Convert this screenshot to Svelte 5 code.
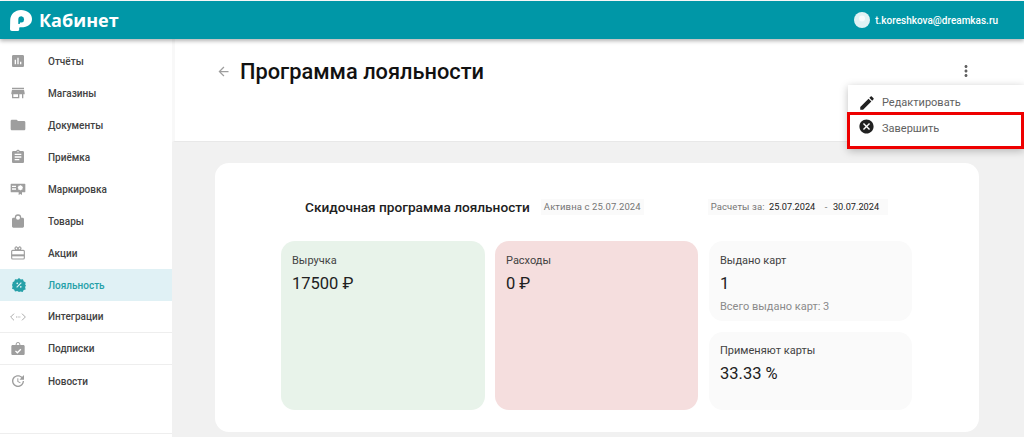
<script lang="ts">
  const menu = [
    { label: "Отчёты", icon: "report" },
    { label: "Магазины", icon: "store" },
    { label: "Документы", icon: "folder" },
    { label: "Приёмка", icon: "clipboard" },
    { label: "Маркировка", icon: "marking" },
    { label: "Товары", icon: "bag" },
    { label: "Акции", icon: "gift" },
    { label: "Лояльность", icon: "loyalty", active: true },
    { label: "Интеграции", icon: "code", line: true },
    { label: "Подписки", icon: "case", line: true },
    { label: "Новости", icon: "news" },
  ];

  const paths: Record<string, string> = {
    report: "M19 3H5c-1.1 0-2 .9-2 2v14c0 1.1.9 2 2 2h14c1.1 0 2-.9 2-2V5c0-1.1-.9-2-2-2zM9 17H7v-7h2v7zm4 0h-2V7h2v10zm4 0h-2v-4h2v4z",
    store: "M21 4H3v2h18V4zm1 10v-2l-1-5H3l-1 5v2h1v6h11v-6h4v6h2v-6h2zm-10 4H5v-4h7v4z",
    folder: "M10 4H3c-1.1 0-2 .9-2 2v12c0 1.1.9 2 2 2h18c1.1 0 2-.9 2-2V8c0-1.1-.9-2-2-2h-9l-2-2z",
    clipboard: "M19 3h-4.18C14.4 1.84 13.3 1 12 1c-1.3 0-2.4.84-2.82 2H5c-1.1 0-2 .9-2 2v14c0 1.1.9 2 2 2h14c1.1 0 2-.9 2-2V5c0-1.1-.9-2-2-2zm-7 0c.55 0 1 .45 1 1s-.45 1-1 1-1-.45-1-1 .45-1 1-1zm2 14H7v-2h7v2zm3-4H7v-2h10v2zm0-4H7V7h10v2z",
    marking: "M2 4h20c.6 0 1 .4 1 1v11c0 .6-.4 1-1 1h-4v4l-2.500-1.500L13 21v-4H2c-.6 0-1-.4-1-1V5c0-.6.4-1 1-1zm1 3v2h6V7H3zm0 4v2h6v-2H3zm12.500-5l-1.200 1.200h-1.800v1.800L11.300 10.200l1.200 1.200v1.800h1.800l1.200 1.200 1.200-1.200h1.800v-1.800l1.200-1.200-1.200-1.200V7.200h-1.800z",
    bag: "M5 7h2.100A5 5 0 0 1 12 2a5 5 0 0 1 4.900 5H19c1 0 2 1 2 2v11c0 1-1 2-2 2H5c-1 0-2-1-2-2V9c0-1 1-2 2-2zM12 4.200a3 3 0 1 0 0 6 3 3 0 0 0 0-6z",
    case: "M20 6h-4.500V5c0-1.900-1.600-3.500-3.500-3.500S8.500 3.100 8.500 5v1H4c-1.100 0-2 .9-2 2v11c0 1.100.9 2 2 2h16c1.100 0 2-.9 2-2V8c0-1.100-.9-2-2-2zM10 5c0-1.100.9-2 2-2s2 .9 2 2v1h-4V5zm5.600 6.600L17 13l-6 6-3.500-3.500 1.400-1.400 2.100 2.100z",
    news: "M21 10.120h-6.780l2.740-2.820c-2.730-2.700-7.150-2.800-9.880-.1-2.730 2.710-2.730 7.080 0 9.790s7.150 2.710 9.880 0C18.320 15.650 19 14.080 19 12.100h2c0 1.980-.88 4.550-2.640 6.290-3.510 3.480-9.210 3.480-12.720 0-3.500-3.470-3.530-9.110-.02-12.580s9.140-3.470 12.650 0L21 3v7.120zM12.500 8v4.250l3.500 2.080-.72 1.210L11 13V8h1.500z",
  };
</script>

<div class="page">
  <header class="topbar">
    <div class="brand">
      <svg class="logo" viewBox="0 0 22 21" width="22" height="21">
        <path fill="#fff" d="M11 0C5 0 .5 4.300.2 10L0 19c0 1.200.8 2 2 2h6c.8 0 1.200-.5 1.200-1.200V18c0-.5.300-.7.800-.7h1C18 17.300 22 14 22 9 22 3.500 17 0 11 0z" />
        <path fill="#0097a7" d="M11.500 6.300a3.200 3.200 0 0 0-3.200 3.200V14h1.400l.4-1.400h1.400a3.200 3.200 0 0 0 0-6.300z" />
      </svg>
      <span class="brand-name">Кабинет</span>
    </div>
    <div class="user">
      <svg viewBox="0 0 16 16" width="16" height="16">
        <circle cx="8" cy="8" r="8" fill="#e0f2f4" />
        <circle cx="8" cy="6.500" r="3" fill="#f6fbfc" />
      </svg>
      <span>t.koreshkova@dreamkas.ru</span>
    </div>
  </header>

  <div class="body">
    <nav class="sidebar">
      {#each menu as item}
        <div class="nav-item" class:active={item.active} class:line={item.line}>
          <span class="nav-icon">
            {#if item.icon === "code"}
              <svg viewBox="0 0 24 24" width="16" height="16" fill="none" stroke="#9e9e9e" stroke-width="1.300">
                <path d="M6 7l-5 5 5 5M18 7l5 5-5 5" />
                <path d="M9 12h1.500M11.500 12H13M14 12h1.500" />
              </svg>
            {:else if item.icon === "gift"}
              <svg viewBox="0 0 24 24" width="16" height="16" fill="none" stroke="#9e9e9e" stroke-width="1.700">
                <rect x="2.500" y="8" width="19" height="13" rx="1.500" />
                <path d="M2.500 15.500h19" stroke-width="3" />
                <path d="M12 8C9 8 7.500 6.500 7.500 5S9 2.500 10 3s2 2 2 5c0-3 1-4.500 2-5s2.500.5 2.500 2-1.500 3-4.500 3z" />
              </svg>
            {:else if item.icon === "loyalty"}
              <svg class="badge" viewBox="0 0 24 24" width="14" height="14">
                <path fill="#26a0a8" d="M12 0l3 2.500 3.800-.5 1.200 3.700 3.500 1.800L22.500 11.500 24 12l-1.500 4 1 3.500-3.500 1-1.700 3.500-3.800-.7L12 24l-3-1.700-3.800.7-1.700-3.500-3.500-1 1-3.500L0 12l1.500-4L.5 7.500 4 5.700 5.200 2 9 2.500z" />
                <path stroke="#e0f1f5" stroke-width="2" d="M16 8l-8 8" />
                <circle cx="9" cy="9" r="1.500" fill="#e0f1f5" />
                <circle cx="15" cy="15" r="1.500" fill="#e0f1f5" />
              </svg>
            {:else}
              <svg viewBox="0 0 24 24" width="16" height="16"><path fill="#9e9e9e" fill-rule="evenodd" d={paths[item.icon]} /></svg>
            {/if}
          </span>
          <span>{item.label}</span>
        </div>
      {/each}
      <div class="nav-end"></div>
    </nav>

    <main class="main">
      <div class="page-head">
        <svg class="back" viewBox="0 0 24 24" width="15" height="15"><path fill="#9e9e9e" d="M20 11H7.830l5.590-5.590L12 4l-8 8 8 8 1.410-1.410L7.830 13H20v-2z" /></svg>
        <h1>Программа лояльности</h1>
        <svg class="more" viewBox="0 0 24 24" width="18" height="18"><path fill="#616161" d="M12 8c1.100 0 2-.9 2-2s-.9-2-2-2-2 .9-2 2 .9 2 2 2zm0 2c-1.100 0-2 .9-2 2s.9 2 2 2 2-.9 2-2-.9-2-2-2zm0 6c-1.100 0-2 .9-2 2s.9 2 2 2 2-.9 2-2-.9-2-2-2z" /></svg>
      </div>

      <div class="content">
        <section class="panel">
          <div class="panel-head">
            <h2>Скидочная программа лояльности</h2>
            <span class="chip status">Активна с 25.07.2024</span>
            <span class="chip range">Расчеты за: <b>25.07.2024</b> <i>-</i> <b>30.07.2024</b></span>
          </div>
          <div class="stats">
            <div class="stat tall green">
              <div class="stat-label">Выручка</div>
              <div class="stat-value">17500 ₽</div>
            </div>
            <div class="stat tall pink">
              <div class="stat-label">Расходы</div>
              <div class="stat-value">0 ₽</div>
            </div>
            <div class="stat-col">
              <div class="stat grey issued">
                <div class="stat-label">Выдано карт</div>
                <div class="stat-value">1</div>
                <div class="stat-note">Всего выдано карт: 3</div>
              </div>
              <div class="stat grey applied">
                <div class="stat-label">Применяют карты</div>
                <div class="stat-value">33.33 %</div>
              </div>
            </div>
          </div>
        </section>
      </div>
    </main>
  </div>

  <div class="popup">
    <div class="popup-item">
      <svg viewBox="0 0 24 24" width="18" height="18"><path fill="#212121" d="M3 17.250V21h3.750L17.810 9.940l-3.750-3.750L3 17.250zM20.710 7.040c.39-.39.39-1.020 0-1.410l-2.340-2.340c-.39-.39-1.020-.39-1.410 0l-1.830 1.830 3.750 3.750 1.830-1.830z" /></svg>
      <span>Редактировать</span>
    </div>
    <div class="popup-item marked">
      <svg class="cancel" viewBox="0 0 24 24" width="17" height="17"><path fill="#212121" d="M12 2C6.470 2 2 6.470 2 12s4.470 10 10 10 10-4.470 10-10S17.530 2 12 2zm5 13.590L15.590 17 12 13.410 8.410 17 7 15.590 10.590 12 7 8.410 8.410 7 12 10.590 15.590 7 17 8.410 13.410 12 17 15.590z" /></svg>
      <span>Завершить</span>
    </div>
  </div>
</div>

<style>
  :global(body) {
    margin: 0;
    background: #fff;
    font-family: Roboto, "Liberation Sans", sans-serif;
  }

  .page {
    position: relative;
    width: 1024px;
    height: 437px;
    overflow: hidden;
    display: flex;
    flex-direction: column;
  }

  .topbar {
    flex: none;
    height: 38px;
    margin-top: 1px;
    background: #0097a7;
    box-shadow: 0 2px 4px rgba(0, 0, 0, 0.3);
    display: flex;
    align-items: center;
    justify-content: space-between;
    padding: 0 26px 0 10px;
    color: #fff;
    position: relative;
    z-index: 2;
  }

  .brand {
    display: flex;
    align-items: center;
    gap: 7px;
  }

  .brand-name {
    font-family: "Open Sans", sans-serif;
    font-size: 18px;
    font-weight: 700;
    line-height: 24px;
  }

  .user {
    display: flex;
    align-items: center;
    gap: 5px;
    font-size: 10px;
    font-weight: 500;
  }

  .body {
    flex: 1;
    display: flex;
    min-height: 0;
  }

  .sidebar {
    flex: none;
    width: 172px;
    padding-top: 6px;
    display: flex;
    flex-direction: column;
    font-size: 10px;
    font-weight: 500;
    color: #424242;
  }

  .nav-item {
    flex: none;
    height: 32px;
    display: flex;
    align-items: center;
    padding-left: 10px;
    box-sizing: border-box;
  }

  .nav-item.line {
    border-bottom: 1px solid #eeeeee;
  }

  .nav-item.active {
    background: #e0f1f5;
    color: #26a0a8;
  }

  .nav-icon {
    width: 38px;
    display: flex;
  }

  .badge {
    margin-left: 2px;
  }

  .nav-end {
    margin-top: auto;
    margin-bottom: 3px;
    border-bottom: 1px solid #eeeeee;
  }

  .main {
    flex: 1;
    min-width: 0;
    display: flex;
    flex-direction: column;
  }

  .page-head {
    flex: none;
    height: 103px;
    box-sizing: border-box;
    display: flex;
    align-items: flex-start;
    padding: 20px 49px 0 41px;
    border-left: 3px solid #f8f8f8;
    border-bottom: 1px solid #e8e8e8;
  }

  .back {
    margin: 5px 9px 0 0;
  }

  h1 {
    margin: 0;
    font-size: 21.800px;
    font-weight: 500;
    line-height: 26px;
    color: #111;
  }

  .more {
    margin: 3px 0 0 auto;
  }

  .content {
    flex: 1;
    background: #f1f1f1;
    padding: 21px 45px 0 43px;
  }

  .panel {
    height: 269px;
    box-sizing: border-box;
    background: #fff;
    border-radius: 14px;
    padding: 35px 66px 0 66px;
  }

  .panel-head {
    display: flex;
    align-items: center;
    height: 18px;
    padding-left: 24px;
  }

  h2 {
    margin: 0;
    font-size: 13.650px;
    font-weight: 500;
    color: #212121;
  }

  .chip {
    background: #fafafa;
    font-size: 9.500px;
    color: #757575;
    line-height: 16px;
    padding: 0 3px;
    letter-spacing: 0.1px;
  }

  .status {
    margin-left: 11px;
  }

  .range {
    margin-left: 64px;
    padding-right: 9px;
    white-space: pre;
  }

  .range b {
    font-weight: 400;
    font-size: 9.200px;
    letter-spacing: 0;
    color: #212121;
    margin-left: 2px;
  }

  .range i {
    font-style: normal;
    margin: 0 1px 0 7px;
  }

  .stats {
    margin-top: 25px;
    display: grid;
    grid-template-columns: 204px 203px 204px;
    gap: 10px;
    height: 169px;
  }

  .stat {
    border-radius: 14px;
    padding: 13px 11px;
    box-sizing: border-box;
    color: #212121;
  }

  .green {
    background: #e8f3ea;
  }

  .pink {
    background: #f5dede;
  }

  .grey {
    background: #fafafa;
    flex: 1;
  }

  .issued {
    flex: none;
    height: 80px;
  }

  .applied {
    padding-top: 12px;
  }

  .stat-col {
    margin-left: 1px;
    display: flex;
    flex-direction: column;
    gap: 11px;
  }

  .stat-label {
    font-size: 11px;
    line-height: 14px;
    color: #424242;
  }

  .stat-value {
    margin-top: 6px;
    font-size: 16.500px;
    line-height: 20px;
  }

  .stat-note {
    margin-top: 6px;
    font-size: 11px;
    line-height: 14px;
    color: #8a8a8a;
  }

  .popup {
    position: absolute;
    top: 85px;
    right: 0;
    width: 176px;
    height: 64px;
    background: #fff;
    box-shadow: 0 2px 8px rgba(0, 0, 0, 0.25);
    padding-top: 8px;
    box-sizing: border-box;
    z-index: 3;
    font-size: 11px;
    color: #616161;
  }

  .popup-item {
    display: flex;
    align-items: center;
    gap: 6px;
    padding-left: 10px;
    height: 19px;
  }

  .popup-item.marked {
    position: absolute;
    left: -1px;
    right: 0;
    top: 27px;
    height: 37px;
    box-sizing: border-box;
    border: 3px solid #ee0000;
    padding-left: 8px;
    padding-bottom: 4px;
    gap: 7px;
  }

  .cancel {
    margin-top: -4px;
  }
</style>
